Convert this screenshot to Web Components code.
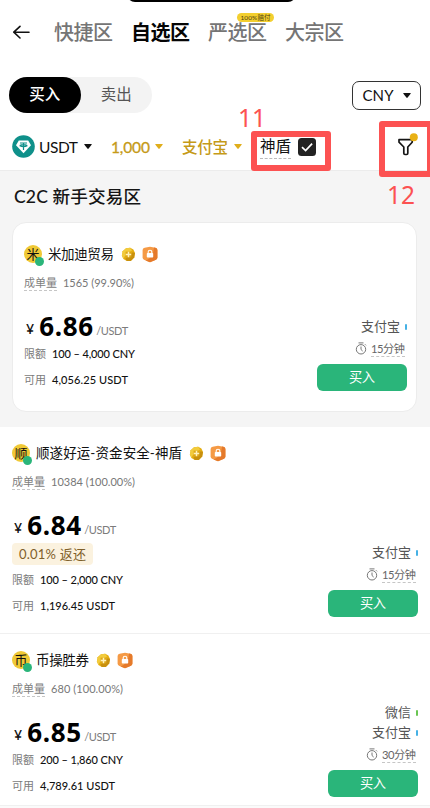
<!DOCTYPE html>
<html lang="zh-CN">
<head>
<meta charset="utf-8">
<title>C2C</title>
<style>
body{margin:0;background:#fff;font-family:Lato,"Noto Sans CJK SC",sans-serif;color:#111}
</style>
</head>
<body>
<c2c-page></c2c-page>
<script>
const define=(name,html,setup)=>customElements.define(name,class extends HTMLElement{
  connectedCallback(){
    if(this.shadowRoot)return;
    const t=document.createElement('template');
    t.innerHTML=typeof html==='function'?html(this):html;
    this.attachShadow({mode:'open'}).append(t.content.cloneNode(true));
    if(setup)setup(this);
  }
});

/* One line of text, tracked so that it is w pixels wide */
define('fit-text','<style>:host{display:inline-block;white-space:pre;flex:none;line-height:1}span{display:inline-block}</style><span><slot></slot></span>',el=>{
  const s=el.shadowRoot.querySelector('span'),w=+el.getAttribute('w'),n=[...el.textContent].length;
  const ls=(w-s.getBoundingClientRect().width)/Math.max(1,n-1);
  s.style.letterSpacing=ls+'px';s.style.marginRight=-ls+'px';
});

define('drop-caret','<style>:host{display:block;flex:none;width:8px;height:5px}svg{display:block}</style><svg width="8" height="5"><path d="M.8 0h6.4q1 0 .4.8L4.6 4.6q-.6.7-1.2 0L.4.8Q-.2 0 .8 0Z" fill="currentColor"/></svg>');

define('zone-tab',el=>`<style>
:host{display:block;position:relative;font-size:20px;color:#757575;font-weight:500;height:30px}
:host([active]){color:#050505;font-weight:700}
fit-text{line-height:30px}
b{position:absolute;left:29px;top:-4px;width:37px;height:9px;border-radius:5px;background:#f3cf2f;color:#4c4010;font-weight:400;display:flex;align-items:center;justify-content:center;font-size:6.5px}
b fit-text{line-height:9px}
</style><fit-text w="59">${el.getAttribute('label')}</fit-text>${el.hasAttribute('tag')?`<b><fit-text w="30">${el.getAttribute('tag')}</fit-text></b>`:''}`);

define('zone-header',`<style>
:host{display:flex;height:64px;align-items:center;position:relative;padding-left:12px}
i{position:absolute;left:127px;top:-6px;width:169px;height:8px;border-radius:0 0 8px 8px;background:#000}
svg{flex:none;margin-right:24px}
zone-tab{margin-right:18px}
</style><i></i>
<svg width="18" height="14" fill="none" stroke="#111" stroke-width="1.6" stroke-linecap="round" stroke-linejoin="round"><path d="M8 1.3 1.8 7.2 8 13M2 7.2h15"/></svg>
<zone-tab label="快捷区"></zone-tab><zone-tab label="自选区" active></zone-tab><zone-tab label="严选区" tag="100%赔付"></zone-tab><zone-tab label="大宗区"></zone-tab>`);

define('trade-bar',`<style>
:host{display:flex;justify-content:space-between;align-items:center;height:62px;padding:0 9px}
.seg{display:flex;width:143px;height:36px;border-radius:18px;background:#f3f3f3;font-size:15.5px;color:#555}
.seg span{flex:1;display:flex;align-items:center;justify-content:center;border-radius:18px}
.seg .on{background:#000;color:#fff;font-weight:500}
.cur{display:flex;align-items:center;justify-content:center;gap:9px;width:67px;height:27px;border:1.2px solid #333;border-radius:7px;font-size:15px}
</style><div class="seg"><span class="on"><fit-text w="31">买入</fit-text></span><span><fit-text w="31">卖出</fit-text></span></div>
<div class="cur"><fit-text w="31">CNY</fit-text><drop-caret></drop-caret></div>`);

define('red-callout',el=>`<style>
:host{position:absolute;display:block;border:6px solid #fc5252;border-radius:3px;box-sizing:border-box}
span{position:absolute;font:24.5px "Noto Sans",sans-serif;color:#fc5252;left:${el.getAttribute('dx')}px;top:${el.getAttribute('dy')}px}
</style><span><fit-text w="28">${el.getAttribute('no')}</fit-text></span>`);

define('filter-bar',`<style>
:host{display:flex;position:relative;height:45px;align-items:center;padding:0 15px 3px 12px;border-bottom:1px solid #ececec;box-sizing:border-box;font-size:15.5px;z-index:1}
.coin{margin-right:4px;flex:none}
.gold{color:#c59a18}
.num{-webkit-text-stroke:.3px #c59a18}
.gold+drop-caret{color:#e0ae1c}
fit-text{line-height:24px}
.shield{border-bottom:1px dashed #bbb;line-height:23px;font-size:15.5px}
.check{margin:0 0 0 7px;flex:none}
.funnel{margin-left:auto;flex:none;align-self:flex-start;margin-top:5px;margin-right:-5px}
red-callout.a{left:251px;top:5px;width:80px;height:40px}
red-callout.b{left:379px;top:-5px;width:54px;height:56px}
</style>
<svg class="coin" width="23" height="23" viewBox="0 0 23 23"><circle cx="11.5" cy="11.5" r="11.3" fill="#0f908a"/><path d="M6.8 5.5h9.4l2.8 4.7-7.5 8L4 10.2Z" fill="#fff"/><path d="M8 8h7M11.5 8v7M7.7 10.6c2 1.1 5.6 1.1 7.6 0M7.7 10.6c1.8-.9 5.6-.9 7.6 0" stroke="#0f908a" stroke-width="1.2" fill="none"/></svg>
<fit-text w="39">USDT</fit-text><drop-caret style="margin:0 19px 0 6px"></drop-caret>
<fit-text class="gold num" w="39">1,000</fit-text><drop-caret style="margin:0 19px 0 5px"></drop-caret>
<fit-text class="gold" w="46" style="font-weight:500">支付宝</fit-text><drop-caret style="margin:0 18px 0 6px"></drop-caret>
<fit-text class="shield" w="31">神盾</fit-text>
<svg class="check" width="18" height="18"><rect width="18" height="18" rx="3.5" fill="#222"/><path d="m4 9.2 3.6 3.4 6.5-7" fill="none" stroke="#fff" stroke-width="1.7"/></svg>
<svg class="funnel" width="22" height="26"><path d="M1 8.7h13.2v2.5L9.8 16v6.2q0 1.3-1.2 1.3H7q-1.2 0-1.2-1.3V16L1 11.2Z" fill="none" stroke="#151515" stroke-width="1.7" stroke-linejoin="round"/><circle cx="15.8" cy="6.2" r="4" fill="#e9b115"/></svg>
<red-callout class="a" no="11" dx="-19" dy="-36"></red-callout><red-callout class="b" no="12" dx="2" dy="51"></red-callout>`);

define('offer-item',el=>{const a=n=>el.getAttribute(n);
const pays=a('pays').split(' ').map(p=>`<div class="pay"><fit-text w="${p==='微信'?26:39}">${p}</fit-text><i style="background:${p==='微信'?'#69c552':'#45b1e5'}"></i></div>`).join('');
return `<style>
:host{display:flex;justify-content:space-between;align-items:flex-end}
.left{display:flex;flex-direction:column;align-items:flex-start;padding-bottom:4px}
.left>div{display:flex;align-items:center}
.head{height:22px;font-size:13.5px}
.head>fit-text{padding-top:1px}
.av{width:18px;height:18px;border-radius:50%;background:#f0c936;position:relative;display:flex;align-items:center;justify-content:center;margin-right:6px;font-size:13px}
.av fit-text{margin-top:1px}
.av i{position:absolute;width:9px;height:9px;border-radius:50%;background:#2ab57a;right:-2px;bottom:-3px}
.g{margin:1px 0 0 7px}.s{margin:1px 0 0 6px}
.stat{height:20px;margin-top:7px;font-size:11px;color:#808080;gap:6px}
.stat .u{border-bottom:1px dashed #c6c6c6;line-height:15px;margin-top:2px}
.stat .v{color:#777}
.price{height:30px;margin-top:19px;padding-left:2px}
.price .y{font-size:14px;font-weight:500;padding-top:6px;margin-right:5px}
.price .n{font:bold 26px "Noto Sans",sans-serif;line-height:30px;color:#000}
.price .q{font-size:11px;color:#7c7c7c;margin-left:3px;padding-top:9px}
.tag{height:22px;margin-top:3px;padding:0 7px;border-radius:4px;background:#fbf2df;color:#80602a;font-size:13px}
.row{height:16px;margin-top:10px;font-size:11px;gap:6px;color:#7b7b7b}
.row b{font-weight:500;color:#111}
.lim{margin-top:4px}.tag+.lim{margin-top:6px}
.right{display:flex;flex-direction:column;align-items:flex-end}
.pay{height:20px;display:flex;align-items:center;font-size:13px;color:#555}
.pay i{width:2px;height:6px;border-radius:1px;margin:1px 0 0 5px}
.time{height:18px;display:flex;align-items:center;font-size:11.2px;color:#666;margin:3px 2px 7px 0;gap:4px}
.time fit-text{border-bottom:1px dashed #c6c6c6;line-height:15px;margin-top:1px}
.buy{width:90px;height:27px;border-radius:6px;background:#2ab57a;color:#fff;display:flex;align-items:center;justify-content:center;font-size:13.3px}
</style>
<div class="left">
<div class="head"><span class="av"><fit-text w="13">${a('name')[0]}</fit-text><i></i></span><fit-text w="${a('nw')}">${a('name')}</fit-text>
<svg class="g" width="15" height="15" viewBox="0 0 15 15"><path d="M5 1.2 9.2.8 12.4 2.6 14 6 13.2 10.6 9.8 13.9 5.8 14 2.4 12 .9 8.4 1.7 4.2Z" fill="#e4ad12"/><path d="M5 1.2 9.2.8 11 3.4 3.6 9.6 2.4 12 .9 8.4 1.7 4.2Z" fill="#f2cb3c"/><path d="M14 6 13.2 10.6 9.8 13.9 5.8 14 4.4 11.7 11.8 5.2Z" fill="#c8900e"/><path d="M4.6 4.6h5.8v5.8H4.6Z" fill="#dda616"/><path d="M7.5 4.8v5.4M4.8 7.5h5.4" stroke="#fff2bd" stroke-width="1.5"/></svg>
<svg class="s" width="16" height="17" viewBox="0 0 16 17"><path d="M2.6 1.8 8 .8l5.4 1Q15.4 2.2 15.4 4v7.6q0 1.5-1.4 2.1l-6 2.5-6-2.5Q.6 13.1.6 11.6V4Q.6 2.2 2.6 1.8Z" fill="#f59a45"/><path d="M12 1.6l1.4.2Q15.4 2.2 15.4 4v7.6q0 1.5-1.4 2.1l-6 2.5-4.5-1.8Q11.5 12 12 1.6Z" fill="#e57a2b"/><rect x="4.8" y="7" width="6.4" height="4.5" rx=".7" fill="#fff"/><path d="M6.2 7V5.8q0-1.5 1.8-1.5t1.8 1.5V7" fill="none" stroke="#fff" stroke-width="1.1"/></svg></div>
<div class="stat"><fit-text class="u" w="33">成单量</fit-text><fit-text class="v" w="${a('sw')}">${a('stat')}</fit-text></div>
<div class="price"><fit-text class="y" w="9">¥</fit-text><fit-text class="n" w="54">${a('price')}</fit-text><fit-text class="q" w="32">/USDT</fit-text></div>
${el.hasAttribute('tag')?`<div class="tag"><fit-text w="67">${a('tag')}</fit-text></div>`:''}
<div class="row lim"><fit-text w="22">限额</fit-text><b><fit-text w="${a('lw')}">${a('limit')}</fit-text></b></div>
<div class="row"><fit-text w="22">可用</fit-text><b><fit-text w="${a('aw')}">${a('avail')}</fit-text></b></div>
</div>
<div class="right">${pays}
<div class="time"><svg width="12" height="13" fill="none" stroke="#777" stroke-width="1"><circle cx="6" cy="7.3" r="4.7"/><path d="M3.5.9h5M6 4.5v3l1.7 1.6M10 2.3l1 1"/></svg><fit-text w="34">${a('time')}</fit-text></div>
<div class="buy"><fit-text w="26">买入</fit-text></div></div>`});

define('newbie-zone',`<style>
:host{display:block;background:#f5f5f5;height:256px;box-sizing:border-box;padding:12px 13px 0 12px}
h2{margin:0 0 0 2px;height:27px;font-size:17.6px;font-weight:500;color:#151515;display:flex;align-items:center}
div{margin-top:12px;height:190px;box-sizing:border-box;padding:20px 9px 0 11px;border:1px solid #ececec;border-radius:14px;background:#fff}
</style><h2><fit-text w="127">C2C 新手交易区</fit-text></h2><div><slot></slot></div>`);

define('c2c-page',`<style>
:host{display:block;width:430px;height:808px;overflow:hidden;position:relative;background:#fff}
.o{padding:15px 12px 16px;border-bottom:1px solid #f0f0f0}
.o.last{padding-bottom:8px}
.end{height:3px;background:#fafafa}
</style>
<zone-header></zone-header><trade-bar></trade-bar><filter-bar></filter-bar>
<newbie-zone><offer-item name="米加迪贸易" nw="66" stat="1565 (99.90%)" sw="71" price="6.86" limit="100 – 4,000 CNY" lw="83" avail="4,056.25 USDT" aw="76" pays="支付宝" time="15分钟"></offer-item></newbie-zone>
<div class="o"><offer-item name="顺遂好运-资金安全-神盾" nw="146" stat="10384 (100.00%)" sw="84" price="6.84" tag="0.01% 返还" limit="100 – 2,000 CNY" lw="83" avail="1,196.45 USDT" aw="75" pays="支付宝" time="15分钟"></offer-item></div>
<div class="o last"><offer-item name="币操胜券" nw="53" stat="680 (100.00%)" sw="72" price="6.85" limit="200 – 1,860 CNY" lw="83" avail="4,789.61 USDT" aw="75" pays="微信 支付宝" time="30分钟"></offer-item></div>
<div class="end"></div>`);
</script>
</body>
</html>
